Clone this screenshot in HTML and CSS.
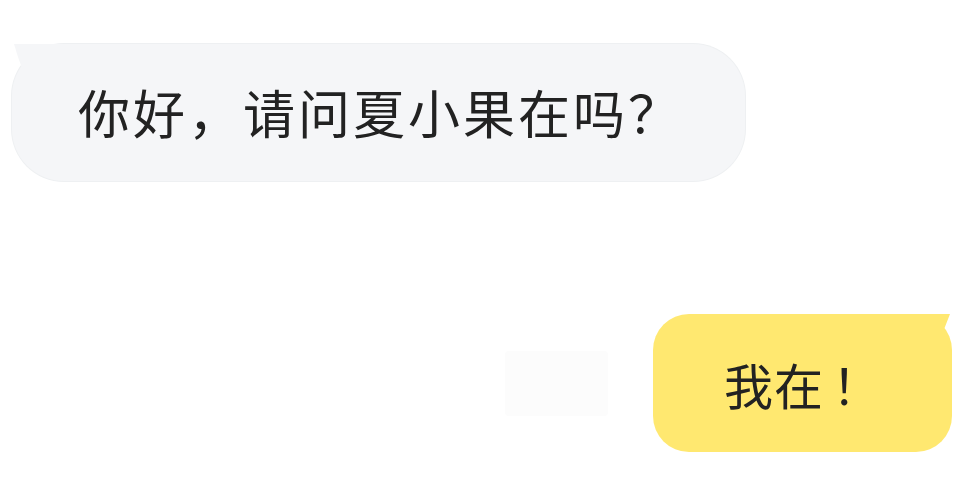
FILE: index.html
```html
<!DOCTYPE html>
<html lang="zh-CN">
<head>
<meta charset="utf-8">
<link rel="stylesheet" href="styles.css">
</head>
<body>
<div class="chat">
  <div class="row row-left">
    <div class="bubble bubble-in">你好，请问夏小果在吗？</div>
  </div>
  <div class="row row-right">
    <div class="ghost"></div>
    <div class="bubble bubble-out">我在<span class="bang">！</span></div>
  </div>
</div>
</body>
</html>
```

FILE: styles.css
```css
html, body {
  margin: 0;
  padding: 0;
  background: #ffffff;
}

.chat {
  width: 974px;
  height: 478px;
  display: flex;
  flex-direction: column;
  padding-top: 44px;
  box-sizing: border-box;
  font-family: "Noto Sans CJK SC", "Noto Sans", sans-serif;
  color: #222222;
}

.row {
  display: flex;
  align-items: center;
}

.row-left {
  padding-left: 12px;
}

.row-right {
  justify-content: flex-end;
  padding-right: 22px;
  margin-top: 133px;
}

.bubble {
  position: relative;
  display: flex;
  align-items: center;
  box-sizing: border-box;
}

.bubble-in {
  width: 733px;
  height: 137px;
  padding-left: 66px;
  padding-bottom: 2px;
  background: #f5f6f8;
  border-radius: 52px;
  box-shadow: 0 0 0 1px #eef0f2;
  font-size: 52px;
  letter-spacing: 3px;
}

.bubble-in::before {
  content: "";
  position: absolute;
  left: 2px;
  top: 0;
  width: 60px;
  height: 32px;
  background: #f5f6f8;
  clip-path: polygon(0 0, 60px 0, 60px 20px, 9px 27px, 4px 13px);
}

.bubble-out {
  width: 299px;
  height: 138px;
  padding-left: 71px;
  background: #ffe870;
  border-radius: 36px;
  font-size: 49px;
  letter-spacing: 1px;
}

.bubble-out::before {
  content: "";
  position: absolute;
  right: 2px;
  top: 0;
  width: 50px;
  height: 36px;
  background: #ffe870;
  clip-path: polygon(0 0, 50px 0, 43px 18px, 50px 36px, 0 36px);
}

.bang {
  margin-left: 8px;
}

.ghost {
  width: 103px;
  height: 65px;
  margin-right: 45px;
  background: #fcfcfc;
  border-radius: 4px;
}
```
